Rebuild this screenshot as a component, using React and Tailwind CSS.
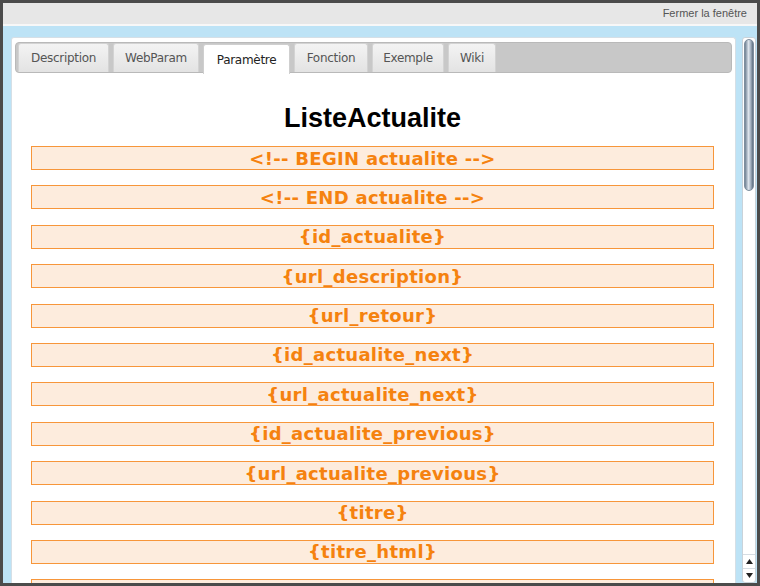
import React from 'react';

const tabs = ['Description', 'WebParam', 'Paramètre', 'Fonction', 'Exemple', 'Wiki'];
const tabWidths = [91, 86, 87, 74, 72, 48];

const params = [
  '<!-- BEGIN actualite -->',
  '<!-- END actualite -->',
  '{id_actualite}',
  '{url_description}',
  '{url_retour}',
  '{id_actualite_next}',
  '{url_actualite_next}',
  '{id_actualite_previous}',
  '{url_actualite_previous}',
  '{titre}',
  '{titre_html}',
  '',
];

const Scrollbar = () => (
  <div className="w-[14px] flex flex-col bg-white border border-[#c9d3da] rounded-[3px] overflow-hidden">
    <div className="h-[152px] mx-[1px] mt-[1px] rounded-[6px] border border-[#7d8e9e] bg-[linear-gradient(90deg,#6f8193,#dfe6ee_45%,#9aa9b8_75%,#5c6d7e)]" />
    <div className="flex-1" />
    <div className="h-[14px] flex items-center justify-center border-t border-[#d6dde3]">
      <svg width="7" height="5" viewBox="0 0 7 5"><path d="M3.5 0 L7 5 L0 5 Z" fill="#222" /></svg>
    </div>
    <div className="h-[14px] flex items-center justify-center border-t border-[#d6dde3]">
      <svg width="7" height="5" viewBox="0 0 7 5"><path d="M0 0 L7 0 L3.5 5 Z" fill="#222" /></svg>
    </div>
  </div>
);

export default function App() {
  return (
    <div className="w-[760px] h-[586px] overflow-hidden bg-[#4b4b4b] pt-[3px] px-[3px] pb-[3px] flex flex-col">
      {/* top bar */}
      <div className="h-[23px] shrink-0 bg-[#e7e7e7] border-b-2 border-[#f7f7f7] flex items-center justify-end pr-[10px]">
        <span className="text-[11px] text-[#555] font-['Liberation_Sans',Arial,sans-serif]">Fermer la fenêtre</span>
      </div>

      <div className="flex-1 min-h-0 bg-[#bde3f6] flex pl-[8px] pt-[11px] pr-[1px]">
        {/* panel */}
        <div className="w-[726px] bg-white border border-[#d5dfe6] border-b-0 rounded-t-[3px] pt-[4px] px-[3px] overflow-hidden">
          <div className="h-[31px] bg-[#c8c8c8] border border-[#b9b9b9] rounded-[4px] flex items-end gap-[4px] pl-[2px]">
            {tabs.map((t, i) => {
              const active = i === 2;
              return (
                <div
                  key={t}
                  style={{ width: tabWidths[i] }}
                  className={
                    active
                      ? 'h-[30px] -mb-[2px] bg-white border border-b-0 border-[#cfcfcf] rounded-t-[3px] flex items-center justify-center text-[12px] text-[#222] font-["DejaVu_Sans",Verdana,sans-serif]'
                      : 'h-[29px] bg-[linear-gradient(#f3f3f3,#e3e3e3)] border border-b-0 border-[#d3d3d3] rounded-t-[3px] flex items-center justify-center text-[12px] text-[#555] font-["DejaVu_Sans",Verdana,sans-serif]'
                  }
                >
                  <span className="tracking-[-0.3px]">{t}</span>
                </div>
              );
            })}
          </div>

          <div className="pl-[16px] pr-[18px]">
            <h1 className="mt-[29px] mb-[12px] text-center text-[27px] leading-[32px] font-bold text-black font-['Liberation_Sans',Arial,sans-serif]">
              ListeActualite
            </h1>
            <div className="flex flex-col gap-[15.4px]">
              {params.map((p, i) => (
                <div
                  key={i}
                  className="h-[24px] shrink-0 bg-[#fdecdd] border border-[#f7963a] flex items-center justify-center text-[18px] font-bold text-[#f5820f] font-['DejaVu_Sans',Verdana,sans-serif] tracking-[0.3px]"
                >
                  {p}
                </div>
              ))}
            </div>
          </div>
        </div>

        <div className="ml-[6px] flex">
          <Scrollbar />
        </div>
      </div>
    </div>
  );
}
